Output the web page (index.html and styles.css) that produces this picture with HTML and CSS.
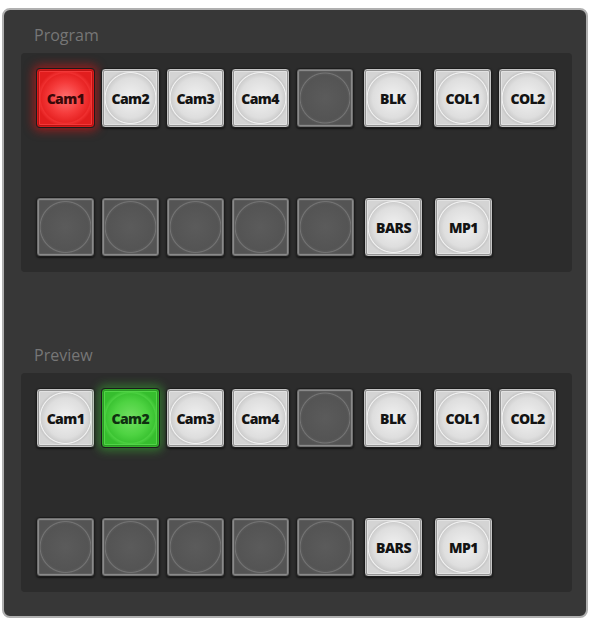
FILE: index.html
```html
<!DOCTYPE html>
<html lang="en">
<head>
    <meta charset="UTF-8">
    <meta name="viewport" content="width=device-width, initial-scale=1.0">
    <title>Switcher - Program / Preview</title>
    <link rel="stylesheet" href="styles.css">
</head>
<body>
    <div class="switcher">
        <div class="bus-label">Program</div>
        <div class="bus">
            <div class="row">
                <div class="key on-air">Cam1</div>
                <div class="key">Cam2</div>
                <div class="key">Cam3</div>
                <div class="key">Cam4</div>
                <div class="key blank"></div>
                <div class="key gap-a">BLK</div>
                <div class="key gap-b">COL1</div>
                <div class="key">COL2</div>
            </div>
            <div class="row">
                <div class="key blank"></div>
                <div class="key blank"></div>
                <div class="key blank"></div>
                <div class="key blank"></div>
                <div class="key blank"></div>
                <div class="key gap-a">BARS</div>
                <div class="key gap-b">MP1</div>
            </div>
        </div>

        <div class="bus-label preview-label">Preview</div>
        <div class="bus">
            <div class="row">
                <div class="key">Cam1</div>
                <div class="key cued">Cam2</div>
                <div class="key">Cam3</div>
                <div class="key">Cam4</div>
                <div class="key blank"></div>
                <div class="key gap-a">BLK</div>
                <div class="key gap-b">COL1</div>
                <div class="key">COL2</div>
            </div>
            <div class="row">
                <div class="key blank"></div>
                <div class="key blank"></div>
                <div class="key blank"></div>
                <div class="key blank"></div>
                <div class="key blank"></div>
                <div class="key gap-a">BARS</div>
                <div class="key gap-b">MP1</div>
            </div>
        </div>
    </div>
</body>
</html>
```

FILE: styles.css
```css
body {
    margin: 0;
    background: #ffffff;
    font-family: 'Open Sans', 'DejaVu Sans', sans-serif;
}
.switcher {
    margin: 8px 3px 5px 2px;
    padding: 15px 14px 24px 17px;
    background: #373737;
    border: 2px solid #b0b0b0;
    border-radius: 8px;
}
.bus-label {
    margin-left: 13px;
    margin-bottom: 8px;
    font-size: 16px;
    line-height: 20px;
    color: #767676;
}
.preview-label {
    margin-top: 73px;
}
.bus {
    display: flex;
    flex-direction: column;
    gap: 69px;
    padding: 15px;
    background: #2c2c2c;
    border-radius: 4px;
}
.row {
    display: flex;
    gap: 6px;
}
.gap-a {
    margin-left: 3px;
}
.gap-b {
    margin-left: 5px;
}
.key {
    box-sizing: border-box;
    width: 59px;
    height: 60px;
    display: flex;
    align-items: center;
    justify-content: center;
    border: 1px solid #1c1c1c;
    border-radius: 4px;
    font-size: 14px;
    font-weight: 800;
    letter-spacing: -0.6px;
    color: #141414;
    background: radial-gradient(circle closest-side,
        #f1f1f1 0%,
        #dedede 70%,
        #cecece 86%,
        #f4f4f4 89%,
        #c8c8c8 93%,
        #d4d4d4 100%);
    box-shadow:
        inset 0 0 0 1px #c4c4c4,
        inset 0 0 0 2px #949494,
        inset 0 0 0 3px #e2e2e2,
        0 1px 2px rgba(0, 0, 0, 0.6);
}
.blank {
    background: radial-gradient(circle closest-side,
        #5b5b5b 0%,
        #545454 80%,
        #5a5a5a 86%,
        #757575 89%,
        #575757 93%,
        #545454 100%);
    box-shadow:
        inset 0 0 0 1px #707070,
        inset 0 0 0 2px #8a8a8a,
        inset 0 0 0 3px #5c5c5c,
        0 1px 2px rgba(0, 0, 0, 0.6);
}
.on-air {
    color: #3a0808;
    background: radial-gradient(circle closest-side,
        #ff7070 0%,
        #f53b3b 55%,
        #e82424 85%,
        #f03030 89%,
        #e21e1e 100%);
    box-shadow:
        inset 0 0 0 1px #d81a1a,
        inset 0 0 0 2px #b81212,
        inset 0 0 0 3px #f23838,
        0 0 10px 3px rgba(225, 20, 20, 0.55);
}
.cued {
    color: #0f3010;
    background: radial-gradient(circle closest-side,
        #72e062 0%,
        #4ed342 60%,
        #3cc433 85%,
        #4bd040 89%,
        #36be2e 100%);
    box-shadow:
        inset 0 0 0 1px #36b02d,
        inset 0 0 0 2px #2a9a24,
        inset 0 0 0 3px #52d447,
        0 0 10px 3px rgba(60, 200, 50, 0.45);
}
```
